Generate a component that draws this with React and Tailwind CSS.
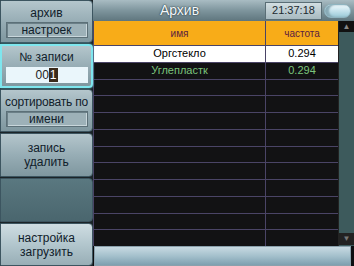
import React from 'react';

const btn =
  'relative flex flex-col items-center justify-center rounded-r-[4px] border border-[#3c5560] bg-gradient-to-b from-[#b4c6cc] via-[#97adb5] to-[#7f979f] text-[12px] leading-[14px] text-[#10202a]';

function Inset({ children }) {
  return (
    <div className="mx-[4px] mt-[2px] flex h-[16px] w-[82px] items-center justify-center border border-[#5c7078] bg-[#9db1b8] shadow-[inset_1px_1px_0_#6b8088,inset_-1px_-1px_0_#c8d6db]">
      {children}
    </div>
  );
}

export default function App() {
  const rows = Array.from({ length: 12 });
  return (
    <div
      className="flex h-[266px] w-[354px] overflow-hidden bg-[#0d0d10]"
      style={{ fontFamily: '"Liberation Sans", Arial, sans-serif' }}
    >
      {/* left menu */}
      <div className="flex w-[93px] flex-col gap-[1px] bg-[#1b2428]">
        <div className={`${btn} h-[43px]`}>
          <span>архив</span>
          <Inset>настроек</Inset>
        </div>
        <div className={`${btn} h-[44px] border-[2px] border-[#7ee6ee] shadow-[0_0_2px_#7ee6ee]`}>
          <span>№ записи</span>
          <div className="mx-[3px] mt-[3px] flex h-[16px] w-[82px] items-center justify-center bg-[#eaf6fb] text-[12px] text-[#222]">
            <span>00</span>
            <span className="bg-[#3a2a1a] px-[1px] text-white">1</span>
          </div>
        </div>
        <div className={`${btn} h-[43px]`}>
          <span className="tracking-[-0.2px]">сортировать по</span>
          <Inset>имени</Inset>
        </div>
        <div className={`${btn} h-[44px]`}>
          <span>запись</span>
          <span>удалить</span>
        </div>
        <div className="h-[44px] rounded-r-[4px] border border-[#3c5560] bg-gradient-to-b from-[#5a7880] to-[#4a666e]" />
        <div className={`${btn} flex-1 from-[#cfdde2] via-[#b2c6cd] to-[#98aeb6]`}>
          <span>настройка</span>
          <span>загрузить</span>
        </div>
      </div>

      {/* right side */}
      <div className="flex flex-1 flex-col">
        {/* title bar */}
        <div className="flex h-[21px] items-center bg-gradient-to-b from-[#a9bcc3] via-[#7e959d] to-[#5f767e] pl-[1px]">
          <div className="flex-1 text-center text-[14px] text-[#f4f8fa] [text-shadow:0_0_2px_#2c4048,0_0_1px_#2c4048]">
            Архив
          </div>
          <div className="mr-[2px] flex h-[18px] w-[57px] items-center justify-center border border-[#5a6e76] bg-gradient-to-b from-[#d2dee2] to-[#a8bac0] text-[11px] text-[#1c2a30]">
            21:37:18
          </div>
          <div className="mr-[3px] h-[14px] w-[27px] rounded-full border border-[#8fb4c0] bg-gradient-to-b from-[#eef8fc] via-[#c4e2ec] to-[#9ccad8] shadow-[inset_4px_0_2px_#88aab6]" />
        </div>

        <div className="flex flex-1">
          {/* table */}
          <div className="flex flex-1 flex-col bg-[#4a4466] pl-[1px]">
            <div className="flex h-[24px] gap-[1px] bg-[#4a4466] text-[10px] text-[#5a2040]">
              <div className="flex w-[171px] items-center justify-center bg-[#f8ac18]">имя</div>
              <div className="flex flex-1 items-center justify-center bg-[#f8ac18]">частота</div>
            </div>
            {rows.map((_, i) => (
              <div key={i} className="mt-[1px] flex h-[15.75px] gap-[1px] text-[11px] leading-none">
                <div
                  className={`flex w-[171px] items-center justify-center ${
                    i === 0 ? 'bg-white text-black' : 'bg-[#121214] text-[#7cc47c]'
                  }`}
                >
                  {i === 0 ? 'Оргстекло' : i === 1 ? 'Углепластк' : ''}
                </div>
                <div
                  className={`flex flex-1 items-center justify-center ${
                    i === 0 ? 'bg-white text-black' : 'bg-[#121214] text-[#7cc47c]'
                  }`}
                >
                  {i < 2 ? '0.294' : ''}
                </div>
              </div>
            ))}
          </div>
          {/* scrollbar */}
          <div className="flex w-[16px] flex-col justify-between border-l border-[#222] bg-[#3d5a5c] pb-[1px]">
            <div className="flex h-[11px] items-center justify-center bg-[#111] text-[8px] text-[#888]">▲</div>
            <div className="flex h-[12px] items-center justify-center bg-[#222] text-[8px] text-[#777]">▼</div>
          </div>
        </div>

        {/* bottom bar */}
        <div className="ml-[1px] mr-[3px] h-[20px] border border-[#8aa0ac] bg-gradient-to-b from-[#c8dae2] via-[#a4c0cc] to-[#7ea0b0]" />
      </div>
    </div>
  );
}
